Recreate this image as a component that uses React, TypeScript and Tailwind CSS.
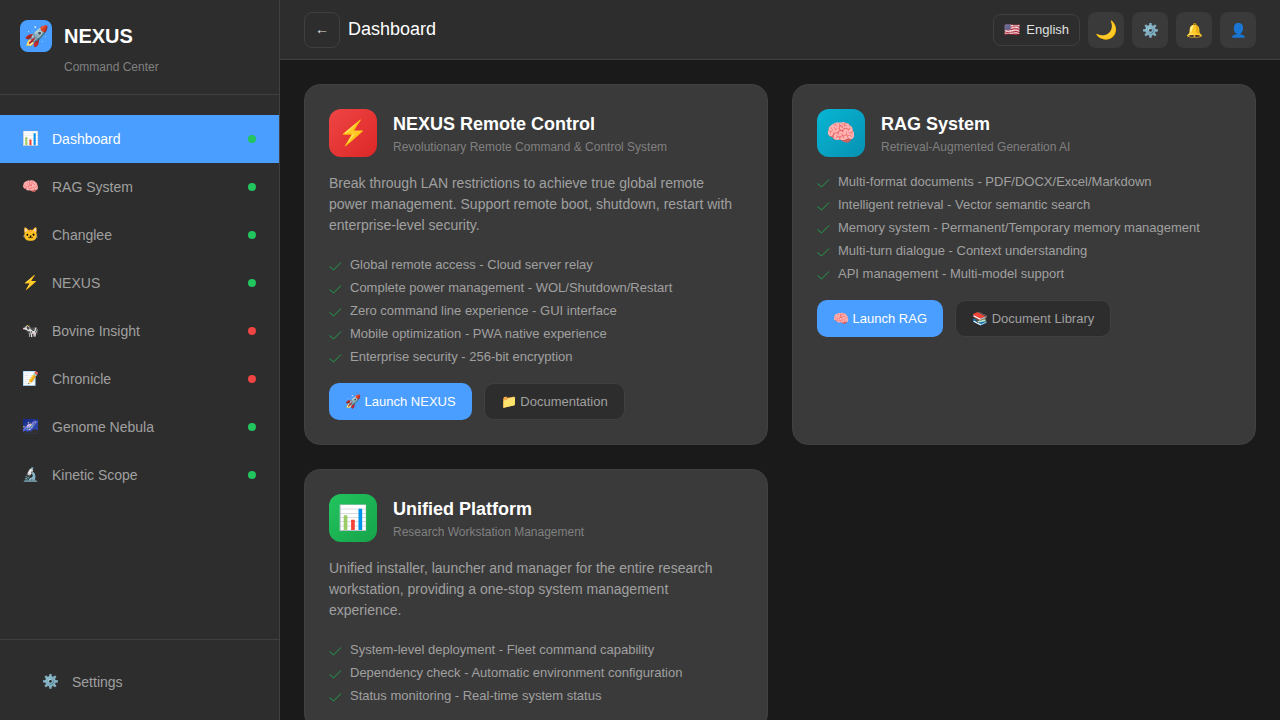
const nav = [
  { icon: "📊", label: "Dashboard", dot: "bg-[#22c55e]", active: true },
  { icon: "🧠", label: "RAG System", dot: "bg-[#22c55e]" },
  { icon: "🐱", label: "Changlee", dot: "bg-[#22c55e]" },
  { icon: "⚡", label: "NEXUS", dot: "bg-[#22c55e]" },
  { icon: "🐄", label: "Bovine Insight", dot: "bg-[#ef4444]" },
  { icon: "📝", label: "Chronicle", dot: "bg-[#ef4444]" },
  { icon: "🌌", label: "Genome Nebula", dot: "bg-[#22c55e]" },
  { icon: "🔬", label: "Kinetic Scope", dot: "bg-[#22c55e]" },
];

function Features({ items }: { items: string[] }) {
  return (
    <ul className="flex flex-col gap-[5px]">
      {items.map((t) => (
        <li key={t} className="flex h-[18px] items-center text-[13px] leading-[18px] text-[#a0a0a0]">
          <span className="mt-[3px] w-[21px] shrink-0">
            <svg width="13" height="9" viewBox="0 0 13 9" fill="none" stroke="#22a04f" strokeWidth="1">
              <path d="M0.5 4.5L4.5 8L12 0.5" />
            </svg>
          </span>
          {t}
        </li>
      ))}
    </ul>
  );
}

function Card({
  icon,
  iconBg,
  title,
  sub,
  desc,
  features,
  actions,
}: {
  icon: string;
  iconBg: string;
  title: string;
  sub: string;
  desc?: string;
  features: string[];
  actions?: [string, string];
}) {
  return (
    <div className="rounded-2xl border border-[#404040] bg-[#3a3a3a] p-6">
      <div className="mb-4 flex items-center gap-4">
        <div className={`flex h-12 w-12 items-center justify-center rounded-xl text-2xl ${iconBg}`}>{icon}</div>
        <div>
          <h3 className="mb-1 text-lg leading-[23px] font-semibold text-white">{title}</h3>
          <p className="text-xs leading-[14px] text-[#808080]">{sub}</p>
        </div>
      </div>
      {desc && <p className="mb-5 text-sm leading-[21px] text-[#a0a0a0]">{desc}</p>}
      <Features items={features} />
      {actions && (
        <div className="mt-[17px] flex items-center gap-3">
          <button className="rounded-[10px] bg-[#4a9eff] px-4 py-[10px] text-[13px] leading-[17px] font-medium text-white">
            {actions[0]}
          </button>
          <button className="rounded-[10px] border border-[#404040] bg-[#2d2d2d] px-4 py-[9px] text-[13px] leading-[17px] font-medium text-[#a0a0a0]">
            {actions[1]}
          </button>
        </div>
      )}
    </div>
  );
}

export default function App() {
  return (
    <div className="flex h-screen overflow-hidden bg-[#1a1a1a] font-['Liberation_Sans',sans-serif]">
      <aside className="flex w-[280px] shrink-0 flex-col border-r border-[#404040] bg-[#2d2d2d]">
        <div className="h-[95px] border-b border-[#404040] px-5 pt-5">
          <div className="flex items-center gap-3">
            <div className="flex h-8 w-8 items-center justify-center rounded-lg bg-[#4a9eff] text-xl">🚀</div>
            <span className="text-[20px] leading-8 font-bold text-white">NEXUS</span>
          </div>
          <p className="mt-2 ml-11 text-xs leading-[14px] text-[#808080]">Command Center</p>
        </div>
        <nav className="flex-1 pt-5">
          {nav.map((n) => (
            <div
              key={n.label}
              className={`flex h-12 items-center gap-3 pr-[23px] pl-5 text-sm ${
                n.active ? "bg-[#4a9eff] text-white" : "text-[#a0a0a0]"
              }`}
            >
              <span className="w-5 text-center text-[13.6px]">{n.icon}</span>
              <span className="flex-1">{n.label}</span>
              <span className={`h-2 w-2 rounded-full ${n.dot}`} />
            </div>
          ))}
        </nav>
        <div className="h-[81px] border-t border-[#404040] px-10 pt-[18px]">
          <div className="flex h-12 items-center gap-3 text-sm text-[#a0a0a0]">
            <span className="w-5 text-center text-[13.6px]">⚙️</span>
            <span>Settings</span>
          </div>
        </div>
      </aside>
      <div className="flex min-w-0 flex-1 flex-col">
        <header className="flex h-[60px] shrink-0 items-center justify-between border-b border-[#404040] bg-[#2d2d2d] px-6">
          <div className="flex items-center gap-2">
            <button className="flex h-9 w-9 items-center justify-center rounded-lg border border-[#404040] pb-0.5 text-sm leading-[normal] text-[#e0e0e0]">
              ←
            </button>
            <h1 className="text-lg leading-[normal] font-medium text-white">Dashboard</h1>
          </div>
          <div className="flex items-center gap-2">
            <div className="flex h-8 items-center gap-[6px] rounded-lg border border-[#404040] px-[10px] text-[13px] leading-[normal] text-[#e0e0e0]">
              <span>🇺🇸</span>
              <span>English</span>
            </div>
            <button className="flex h-9 w-9 items-center justify-center rounded-lg bg-[#3a3a3a] text-lg leading-[normal]">🌙</button>
            <button className="flex h-9 w-9 items-center justify-center rounded-lg bg-[#3a3a3a] text-[13.6px] leading-[normal]">⚙️</button>
            <button className="flex h-9 w-9 items-center justify-center rounded-lg bg-[#3a3a3a] text-[13.6px] leading-[normal]">🔔</button>
            <button className="flex h-9 w-9 items-center justify-center rounded-lg bg-[#3a3a3a] text-[13.6px] leading-[normal]">👤</button>
          </div>
        </header>
        <main className="flex-1 overflow-hidden p-6">
          <div className="grid grid-cols-2 items-stretch gap-6">
            <Card
              icon="⚡"
              iconBg="bg-gradient-to-br from-[#ef4444] to-[#dc2626]"
              title="NEXUS Remote Control"
              sub="Revolutionary Remote Command & Control System"
              desc="Break through LAN restrictions to achieve true global remote power management. Support remote boot, shutdown, restart with enterprise-level security."
              features={[
                "Global remote access - Cloud server relay",
                "Complete power management - WOL/Shutdown/Restart",
                "Zero command line experience - GUI interface",
                "Mobile optimization - PWA native experience",
                "Enterprise security - 256-bit encryption",
              ]}
              actions={["🚀 Launch NEXUS", "📁 Documentation"]}
            />
            <Card
              icon="🧠"
              iconBg="bg-gradient-to-br from-[#06b6d4] to-[#0891b2]"
              title="RAG System"
              sub="Retrieval-Augmented Generation AI"
              features={[
                "Multi-format documents - PDF/DOCX/Excel/Markdown",
                "Intelligent retrieval - Vector semantic search",
                "Memory system - Permanent/Temporary memory management",
                "Multi-turn dialogue - Context understanding",
                "API management - Multi-model support",
              ]}
              actions={["🧠 Launch RAG", "📚 Document Library"]}
            />
            <Card
              icon="📊"
              iconBg="bg-gradient-to-br from-[#22c55e] to-[#16a34a]"
              title="Unified Platform"
              sub="Research Workstation Management"
              desc="Unified installer, launcher and manager for the entire research workstation, providing a one-stop system management experience."
              features={[
                "System-level deployment - Fleet command capability",
                "Dependency check - Automatic environment configuration",
                "Status monitoring - Real-time system status",
              ]}
            />
          </div>
        </main>
      </div>
    </div>
  );
}
